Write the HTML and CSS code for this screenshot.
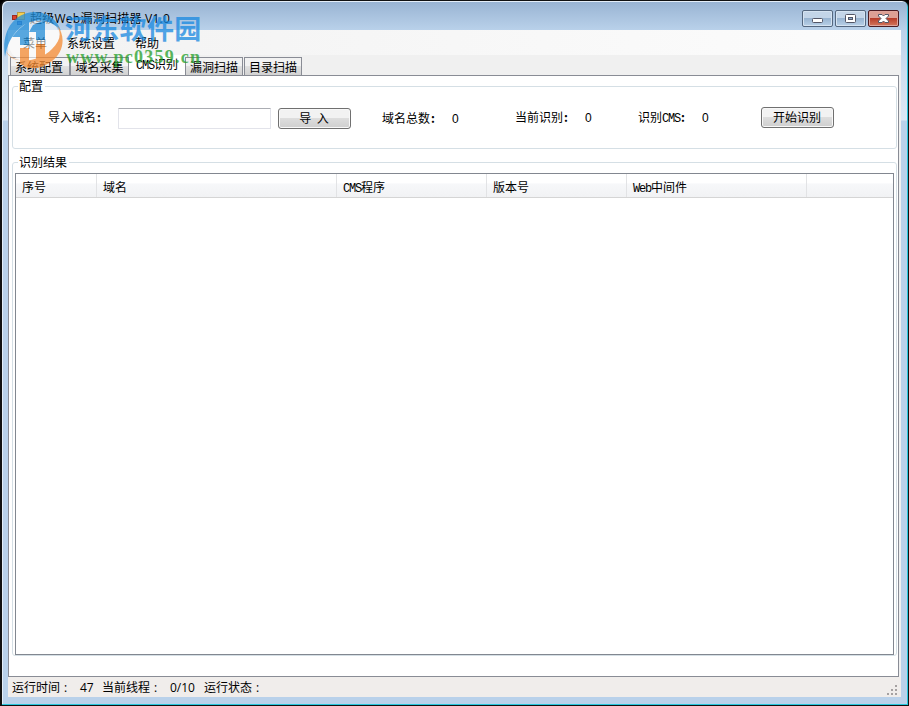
FILE: index.html
```
<!DOCTYPE html>
<html lang="zh-CN">

<head>
    <meta charset="UTF-8">
    <meta name="viewport" content="width=device-width, initial-scale=1.0">
    <title>超级Web漏洞扫描器 V1.0</title>
    <link rel="stylesheet" href="styles.css">
</head>

<body>
    <div class="window">
        <div class="titlebar">
            <svg class="app-icon" width="16" height="16" viewBox="0 0 16 16">
                <rect x="6.5" y="1.5" width="7" height="7" fill="#f7cf50" stroke="#b99a45" />
                <rect x="1.5" y="4.5" width="4" height="4" fill="#d9432f" stroke="#a02a20" />
                <rect x="6.5" y="10.5" width="4" height="3" fill="#4f83e0" stroke="#3460b4" />
            </svg>
            <span class="title">超级Web漏洞扫描器 V1.0</span>
            <div class="controls">
                <button class="control">
                    <svg width="29" height="15"><rect x="9.5" y="7.5" width="10" height="4" rx="1" fill="#fff" stroke="#535666" /></svg>
                </button>
                <button class="control">
                    <svg width="29" height="15"><rect x="9.5" y="3.5" width="10" height="8" rx="1" fill="#fff" stroke="#535666" /><rect x="12.5" y="6.5" width="4" height="2" fill="#8cabcd" stroke="#535666" /></svg>
                </button>
                <button class="control close">
                    <svg width="29" height="15"><path d="M9.500 3.500h3.500l1.500 1.500 1.500-1.500h3.500v1.500l-2.500 2.500 2.500 2.500v1.500h-3.500l-1.500-1.500-1.500 1.500h-3.500v-1.500l2.500-2.500-2.500-2.500z" fill="#fff" stroke="#535666" /></svg>
                </button>
            </div>
        </div>

        <div class="client">
            <div class="menu">
                <span>菜单</span>
                <span>系统设置</span>
                <span>帮助</span>
            </div>

            <div class="tabs">
                <div class="tab">系统配置</div>
                <div class="tab">域名采集</div>
                <div class="tab active"><span class="latin">CMS</span>识别</div>
                <div class="tab">漏洞扫描</div>
                <div class="tab">目录扫描</div>
            </div>

            <div class="page">
                <fieldset class="group config">
                    <legend>配置</legend>
                    <div class="config-row">
                        <span class="import-label">导入域名<b>:</b></span>
                        <input class="domain-input" type="text">
                        <button class="btn import-btn">导 入</button>
                        <span class="stat total">域名总数<b>:</b><span class="num">0</span></span>
                        <span class="stat current">当前识别<b>:</b><span class="num">0</span></span>
                        <span class="stat cms">识别<span class="latin">CMS</span><b>:</b><span class="num">0</span></span>
                        <button class="btn start-btn">开始识别</button>
                    </div>
                </fieldset>

                <fieldset class="group result">
                    <legend>识别结果</legend>
                    <div class="list">
                        <div class="list-head">
                            <span>序号</span>
                            <span>域名</span>
                            <span><span class="latin">CMS</span>程序</span>
                            <span>版本号</span>
                            <span><span class="latin">Web</span>中间件</span>
                        </div>
                    </div>
                </fieldset>
            </div>

            <div class="status">
                <span class="run-time">运行时间<i>:</i></span>
                <span class="seconds">47</span>
                <span class="threads">当前线程<i>:</i></span>
                <span class="count">0/10</span>
                <span>运行状态<i>:</i></span>
                <svg class="grip" width="12" height="12" fill="#a5a1a1">
                    <path d="M8 0h2v2h-2zM4 4h2v2h-2zM8 4h2v2h-2zM0 8h2v2h-2zM4 8h2v2h-2zM8 8h2v2h-2z" />
                </svg>
            </div>
        </div>

        <!-- site watermark over the top left corner -->
        <div class="watermark">
            <svg class="mark" width="60" height="62" viewBox="0 0 60 62">
                <ellipse cx="30" cy="32" rx="26" ry="22" fill="#fff" opacity="0.75" transform="rotate(-22 30 32)" />
                <path d="M1 49C-3 25 8 6 29 4C42 3 53 11 57 23C47 10 28 9 16 20C7 28 3 37 1 49Z" fill="#258fd9" />
                <path d="M14 22L25 13V37H16V29H8Z" fill="#258fd9" />
                <path d="M29 17L41 12V32H32V24H25Z" fill="#258fd9" />
                <path d="M2 43C10 57 34 55 48 41C56 33 58 26 53 17C62 28 60 44 48 53C39 60 29 62 20 59V52C12 53 5 50 2 43Z" fill="#f58a32" />
                <path d="M16 40H25V60L16 56ZM32 36H41V48L32 53Z" fill="#f58a32" />
            </svg>
            <div class="mark-name">河东软件园</div>
            <div class="mark-url">www.pc0359.cn</div>
        </div>
    </div>
</body>

</html>
```
FILE: styles.css
```
* {
    box-sizing: border-box;
}

body {
    margin: 0;
    background: #000;
    font: 12px/16px "Noto Sans CJK SC", sans-serif;
    color: #000;
}

.window {
    position: relative;
    width: 909px;
    height: 706px;
    padding: 0 6px 7px;
    border: 1px solid #111;
    border-left-width: 2px;
    border-radius: 7px 7px 0 0;
    background: linear-gradient(#98b3d2, #b9d1ea 29px, #cfdff0 70px, #dce8f5 119px, #b9d1ea 120px);
    box-shadow: inset -1px -1px #26c6dc, inset 1px 1px #e4eef8;
    overflow: hidden;
}

.titlebar {
    display: flex;
    height: 29px;
    padding-left: 3px;
}

.app-icon {
    margin-top: 10px;
}

.title {
    margin: 10px 0 0 3px;
    font-family: "Open Sans", "Noto Sans CJK SC", sans-serif;
    letter-spacing: 0.25px;
}

.controls {
    display: flex;
    gap: 2px;
    margin: 9px 3px 0 auto;
}

.control {
    width: 31px;
    height: 17px;
    padding: 0;
    border: 1px solid #54677f;
    border-radius: 2px;
    background: linear-gradient(#c3d5e8 45%, #98b4d1 50%, #b9d1e8);
    box-shadow: inset 0 0 0 1px #d5e3f1;
}

.control svg {
    display: block;
}

.close {
    border-color: #4b1c22;
    background: linear-gradient(#dea094 45%, #b83e2a 50%, #d3775d);
    box-shadow: inset 0 0 0 1px #dfa59c;
}

.client {
    display: flex;
    flex-direction: column;
    width: 893px;
    height: 667px;
    background: #f0f0f0;
}

.menu {
    display: flex;
    gap: 20px;
    height: 25px;
    padding: 5px 0 0 15px;
    background: linear-gradient(90deg, #f2f2f2, #fcfcfc);
}

.tabs {
    display: flex;
    align-items: flex-end;
    height: 20px;
    padding-left: 2px;
}

.tab {
    width: 58px;
    height: 18px;
    margin-right: 1px;
    padding-top: 1px;
    border: 1px solid #898c95;
    border-bottom: 0;
    background: linear-gradient(#f2f2f2 45%, #e1e1e1 50%, #d2d2d2);
    text-align: center;
    white-space: nowrap;
}

.tab:first-child {
    width: 60px;
    margin-right: 0;
    padding-right: 2px;
}

.tab:nth-child(2) {
    width: 59px;
    margin-right: 0;
}

.tab.active {
    width: 56px;
    height: 20px;
    margin-right: 0;
    padding-top: 1px;
    border: 0;
    background: #fff;
}

/* half-width letters of the dialog font */
.latin {
    font: 12px/12px "Liberation Mono", monospace;
    letter-spacing: -1.2px;
}

.page {
    height: 602px;
    margin-right: 2px;
    padding: 2px 1px 0 3px;
    border: 1px solid #898c95;
    background: #fff;
}

.group {
    margin: 0;
    padding: 0;
    border: 1px solid #d5dfe5;
    border-radius: 3px;
}

.group legend {
    height: 16px;
    margin-left: 5px;
    padding: 0 2px 0 1px;
}

.config {
    height: 71px;
}

.config-row {
    display: flex;
    align-items: flex-start;
    padding: 13px 0 0 35px;
}

.config-row span {
    white-space: nowrap;
}

.config b {
    display: inline-block;
    width: 8px;
    padding-left: 1px;
}

.import-label {
    width: 70px;
    margin-top: 2px;
}

.domain-input {
    width: 153px;
    height: 21px;
    border: 1px solid #e2e3ea;
    border-top-color: #abadb3;
    border-radius: 1px;
    background: #fff;
    margin-top: 1px;
}

.btn {
    width: 73px;
    height: 21px;
    padding: 0 1px 2px 0;
    border: 1px solid #707070;
    border-radius: 3px;
    background: linear-gradient(#f2f2f2 48%, #dddddd 50%, #cfcfcf);
    box-shadow: inset 0 0 0 1px #f8f8f8;
    font: 12px/16px "Noto Sans CJK SC", sans-serif;
}

.import-btn {
    margin: 1px 31px 0 7px;
    word-spacing: 3px;
}

.stat {
    display: flex;
    align-items: baseline;
    margin-top: 2px;
}

.stat.total {
    width: 133px;
    margin-top: 3px;
}

.stat.current {
    width: 123px;
}

.stat.cms {
    width: 123px;
}

.num {
    margin-left: 14px;
    font: 12px/14px "Liberation Sans", sans-serif;
}

.result {
    height: 502px;
    margin-top: 5px;
}

.list {
    width: 879px;
    height: 482px;
    margin: 3px 0 0 2px;
    border: 1px solid #828790;
}

.list-head {
    display: flex;
    height: 24px;
    border-bottom: 1px solid #d5d5d5;
    background: linear-gradient(#fff 40%, #f7f8fa 42%, #f1f2f4);
}

.list-head > span {
    padding: 5px 0 0 6px;
    border-right: 1px solid #e2e3e5;
}

.list-head > span:nth-child(1) {
    width: 81px;
}

.list-head > span:nth-child(2) {
    width: 240px;
}

.list-head > span:nth-child(3) {
    width: 150px;
}

.list-head > span:nth-child(4) {
    width: 140px;
}

.list-head > span:nth-child(5) {
    width: 180px;
}

.status {
    display: flex;
    height: 20px;
    padding: 3px 2px 0 4px;
    background: #f0edeb;
    font-family: "Open Sans", "Noto Sans CJK SC", sans-serif;
}

.status i {
    padding-left: 4px;
    font-style: normal;
}

.run-time {
    width: 68px;
}

.seconds {
    width: 22px;
}

.threads {
    width: 68px;
}

.count {
    width: 34px;
}

.grip {
    margin: 5px 0 0 auto;
}

.watermark {
    position: absolute;
    top: 7px;
    left: 2px;
    width: 204px;
    height: 64px;
    opacity: 0.75;
    white-space: nowrap;
}

.mark {
    position: absolute;
    left: 0;
    top: 0;
}

.mark-name {
    margin: 2px 0 0 61px;
    font: bold 27px/36px "Noto Sans CJK SC", sans-serif;
    letter-spacing: 0.3px;
    color: #1788e0;
}

.mark-url {
    margin: 1px 0 0 62px;
    font: bold 18px/20px "Liberation Serif", serif;
    letter-spacing: 1.25px;
    color: #239e28;
}
```
